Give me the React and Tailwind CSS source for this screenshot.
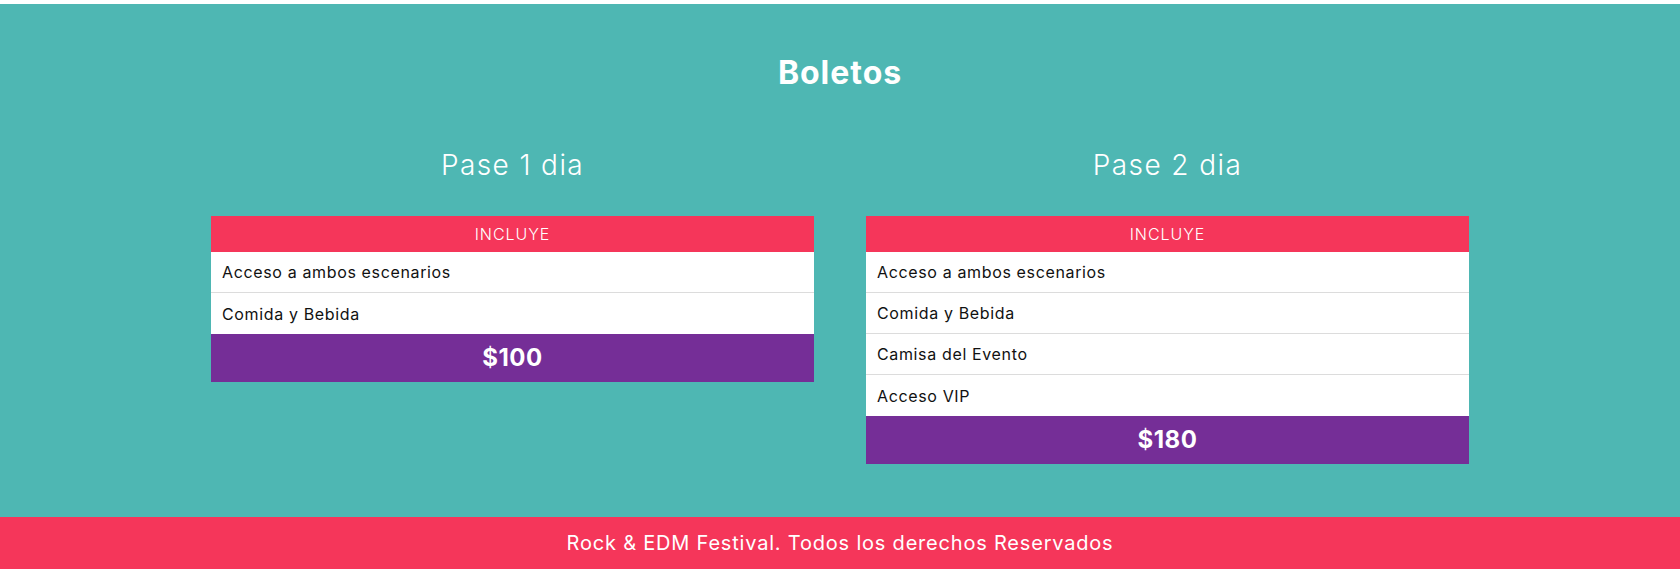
const passes = [
  {
    name: 'Pase 1 dia',
    items: ['Acceso a ambos escenarios', 'Comida y Bebida'],
    price: '$100',
  },
  {
    name: 'Pase 2 dia',
    items: ['Acceso a ambos escenarios', 'Comida y Bebida', 'Camisa del Evento', 'Acceso VIP'],
    price: '$180',
  },
];

const TicketCard = ({ pass }) => {
  return (
    <div className="w-[603px] flex flex-col">
      <h3 className="text-center text-[28px] leading-[36px] font-light tracking-[0.05em] text-white">{pass.name}</h3>
      <div className="mt-[33px] flex flex-col">
        <div className="h-[36px] bg-[#f5365a] flex items-center justify-center text-white text-[16px] font-light tracking-[0.06em]">
          INCLUYE
        </div>
        {pass.items.map((item, i) => (
          <div
            key={item}
            className={`h-[41px] bg-white flex items-center px-[11px] text-[16px] tracking-[0.04em] text-[#111] ${
              i < pass.items.length - 1 ? 'border-b border-[#dcdcdc]' : ''
            }`}
          >
            {item}
          </div>
        ))}
        <div className="h-[48px] bg-[#752e97] flex items-center justify-center text-white text-[24px] font-bold tracking-[0.02em]">
          {pass.price}
        </div>
      </div>
    </div>
  );
};

const App = () => {
  return (
    <div className="min-h-screen bg-white" style={{ fontFamily: 'Inter, "Open Sans", sans-serif' }}>
      <div className="h-[4px] bg-white" />
      <section className="bg-[#4eb7b3] pt-[49px] pb-[53px]">
        <h2 className="text-center text-[32px] leading-[40px] font-bold tracking-[0.03em] text-white">Boletos</h2>
        <div className="mt-[54px] flex justify-center gap-[52px]">
          {passes.map((pass) => (
            <TicketCard key={pass.name} pass={pass} />
          ))}
        </div>
      </section>
      <footer className="h-[52px] bg-[#f5365a] flex items-center justify-center text-white text-[20px] tracking-[0.04em]">
        Rock &amp; EDM Festival. Todos los derechos Reservados
      </footer>
    </div>
  );
};

export default App;
